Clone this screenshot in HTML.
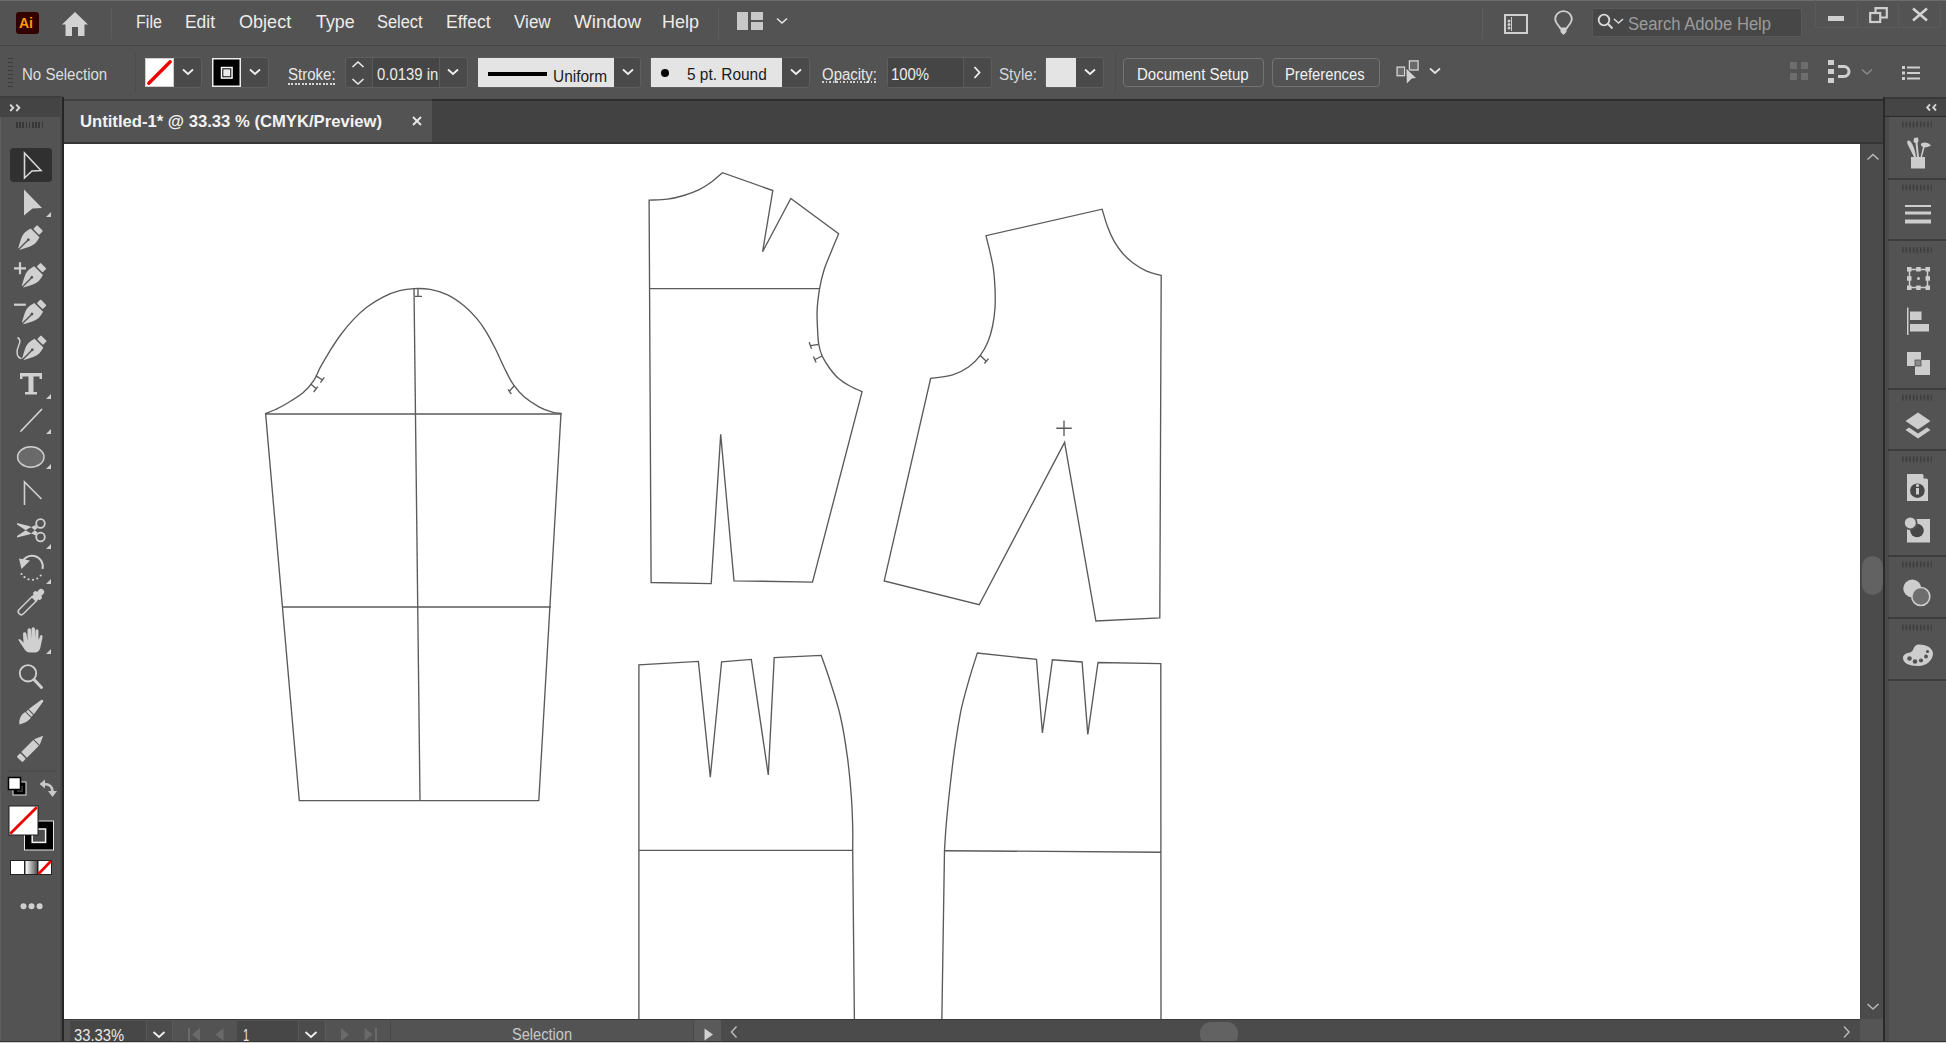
<!DOCTYPE html>
<html><head><meta charset="utf-8">
<style>
*{margin:0;padding:0;box-sizing:border-box}
html,body{width:1946px;height:1043px;overflow:hidden;background:#535353;font-family:"Liberation Sans",sans-serif;color:#e6e6e6}
.a{position:absolute}
#menubar{left:0;top:0;width:1946px;height:45px;background:#535353;border-top:1px solid #6b6b6b}
#ctrl{left:0;top:45px;width:1946px;height:54px;background:#535353;border-top:1px solid #454545}
#tabs{left:62px;top:101px;width:1823px;height:42px;background:#424242}
#tab{left:64px;top:101px;width:368px;height:42px;background:#535353}
#tools{left:0;top:97px;width:62px;height:946px;background:#535353;border-left:1px solid #5d5d5d}
#toolshead{left:0;top:98px;width:60px;height:19px;background:#444}
#canvas{left:64px;top:144px;width:1796px;height:875px;background:#fff}
#vscroll{left:1860px;top:144px;width:23px;height:875px;background:#4b4b4b;border-left:1px solid #444}
#dock{left:1885px;top:97px;width:61px;height:946px;background:#535353}
#status{left:64px;top:1019px;width:1796px;height:24px;background:#4b4b4b}
.mi{position:absolute;top:11px;font-size:17px;line-height:20px;color:#e8e8e8;white-space:nowrap}
.ct{position:absolute;font-size:15px;line-height:18px;color:#e4e4e4;white-space:nowrap}
.box{position:absolute;border:1px solid #5e5e5e;border-radius:3px;background:#4a4a4a}
.sep{position:absolute;width:1px;background:#464646}
.ico{position:absolute;overflow:visible}
</style></head><body>
<div id="menubar" class="a"></div>
<div id="ctrl" class="a"></div>
<div id="tabs" class="a"></div>
<div id="tab" class="a"></div>
<div id="tools" class="a"></div>
<div id="toolshead" class="a"></div>
<div id="canvas" class="a"></div>
<svg class="a" style="left:64px;top:143px" width="1796" height="876" viewBox="64 143 1796 876"><g fill="none" stroke="#5a5a5a" stroke-width="1.35" stroke-linejoin="miter"><path d="M265.6,413.6C267.2,412.9 272.0,411.2 275.5,409.5 C279.0,407.8 282.2,406.3 286.8,403.5 C291.4,400.7 298.5,396.6 303.0,392.8 C307.5,389.0 310.8,385.0 313.7,380.7 C316.6,376.4 317.7,372.1 320.4,367.2 C323.1,362.3 326.4,356.5 329.8,351.1 C333.2,345.7 336.5,340.4 340.5,335.0 C344.5,329.6 349.5,323.6 354.0,318.9 C358.5,314.2 362.5,310.5 367.4,306.8 C372.3,303.1 378.1,299.5 383.5,296.8 C388.9,294.1 394.5,292.1 399.6,290.7 C404.7,289.3 408.9,288.8 414.0,288.6 C419.1,288.4 424.5,288.4 430.1,289.4 C435.7,290.4 442.0,292.1 447.6,294.8 C453.2,297.5 458.8,301.5 463.7,305.5 C468.6,309.5 473.3,314.4 477.1,318.9 C480.9,323.4 483.4,327.1 486.5,332.3 C489.6,337.5 493.0,344.0 495.9,349.8 C498.8,355.6 501.1,361.4 504.0,367.2 C506.9,373.0 510.0,379.8 513.4,384.7 C516.8,389.6 519.9,393.1 524.1,396.8 C528.4,400.5 534.2,404.2 538.9,406.8 C543.6,409.4 548.6,411.1 552.3,412.2 C556.0,413.3 559.5,413.1 561.0,413.3 L538.8,800.6 L299.3,800.6 Z"/><path d="M265.5,414 L561.5,414"/><path d="M414,288.6 L420,800.6"/><path d="M282.4,607 L550.9,607"/><path d="M418,289 L418,296.3 M415,296.3 L422,296.3"/><path d="M315.7,375.6 L322.4,380 M320.4,382.7 L324.4,377.3"/><path d="M310.7,384 L316.4,388.7 M313.7,392 L317.7,386.7"/><path d="M514,386 L509.3,391.4 M508,389.4 L511.3,394"/><path d="M649.1,200.1C652.1,199.9 661.5,200.0 667.3,199.2 C673.1,198.4 678.4,197.1 683.7,195.5 C689.0,193.9 694.6,191.8 699.2,189.6 C703.8,187.4 707.2,185.1 711.1,182.3 C715.0,179.5 720.6,174.3 722.5,172.7 L772.8,190.5 L762.6,251.7 L790.8,198.5 L838.6,233.8 C837.4,236.8 833.7,245.5 831.2,251.7 C828.7,257.8 825.7,264.5 823.8,270.7 C821.9,276.9 820.7,281.9 819.6,288.6 C818.5,295.3 817.4,303.8 817.1,310.7 C816.8,317.6 817.3,324.4 817.6,330.0 C817.9,335.6 818.0,340.2 818.8,344.5 C819.6,348.8 820.5,352.2 822.2,356.0 C823.9,359.8 826.4,363.8 829.1,367.5 C831.8,371.2 834.8,375.2 838.3,378.3 C841.8,381.4 845.8,383.8 849.8,386.0 C853.8,388.2 860.0,390.8 862.1,391.7 L812.5,582.1 L734,580.8 L720.7,434.4 L711.2,583.6 L651.1,582.5 Z"/><path d="M649.2,288.6 L819.6,288.6"/><path d="M818.8,344.4 L810.7,345.7 M809.2,342.2 L811.5,348.8"/><path d="M822.2,356 L815,359.5 M813.4,356.4 L816.1,362.6"/><path d="M930.6,378.5 C934.3,377.9 946.2,376.9 952.6,374.9 C959.0,372.9 964.3,370.0 968.9,366.7 C973.5,363.4 977.2,359.4 980.3,355.3 C983.4,351.2 985.7,347.2 987.7,342.3 C989.8,337.4 991.4,331.7 992.6,326.0 C993.8,320.3 994.6,314.2 995.0,308.0 C995.4,301.8 995.3,295.0 995.0,288.5 C994.7,282.0 994.2,274.9 993.4,268.9 C992.6,262.9 991.3,258.1 990.1,252.6 C988.9,247.1 986.7,238.5 986.0,235.7 L1102.1,209.2 C1103.0,212.0 1105.3,220.5 1107.3,225.9 C1109.3,231.3 1111.6,236.8 1114.2,241.4 C1116.8,246.0 1119.7,249.9 1122.8,253.5 C1125.9,257.1 1129.2,260.1 1133.1,263.0 C1137.0,265.9 1141.4,268.7 1146.1,270.8 C1150.8,272.9 1158.7,274.7 1161.2,275.5 L1159.8,617.9 L1095.9,621 L1064.6,442.4 L979.2,604.7 L884.2,580.9 Z"/><path d="M980,355.3 L986,361 M984.4,363.5 L988.5,358.6"/><path d="M1056.3,428.2 L1071.8,428.2 M1064,420.5 L1064,436"/><path d="M638.9,1030 L638.9,664.9 L698.4,661.4 L710.3,777.1 L721.6,661.8 L751.3,659.4 L768.3,775 L774.2,657.6 L821.2,655.4 C822.7,659.7 826.9,671.2 830.1,681.2 C833.3,691.2 837.4,703.1 840.2,715.5 C843.1,727.9 845.4,742.3 847.2,755.7 C849.1,769.1 850.4,784.2 851.3,796.0 C852.2,807.8 852.5,817.1 852.7,826.2 C852.9,835.3 852.7,846.4 852.7,850.4 L854.5,1030"/><path d="M638.9,850.3 L852.5,850.3"/><path d="M941.7,1030 L944.5,850.4 C944.8,846.4 945.2,836.9 946.1,826.2 C947.0,815.5 948.6,799.4 950.1,786.0 C951.6,772.6 953.2,758.5 955.1,745.7 C957.0,732.9 958.9,720.5 961.2,709.4 C963.6,698.3 966.5,688.6 969.2,679.2 C971.9,669.8 975.9,657.5 977.3,653.1 L1036.5,659.4 L1042.4,733 L1052.4,659.8 L1082.1,662 L1087.8,734.4 L1098,662.5 L1160.8,663.6 L1161,1030"/><path d="M944.8,850.7 L1161,852.2"/></g></svg>
<div id="vscroll" class="a"></div>
<div id="dock" class="a"></div>
<div id="status" class="a"></div>

<!-- MENUBAR -->
<div class="a" style="left:16px;top:12px;width:23px;height:22px;background:#330000;border-radius:3px"></div>
<div class="a" style="left:19px;top:15px;font-size:14px;line-height:16px;font-weight:bold;color:#ff9a00">Ai</div>
<svg class="ico" style="left:62px;top:12px" width="26" height="24" viewBox="0 0 26 24"><path d="M13,0 L26,12.5 L22.5,12.5 L22.5,24 L16,24 L16,15 L10,15 L10,24 L3.5,24 L3.5,12.5 L0,12.5 Z" fill="#d2d2d2"/></svg>
<div class="sep" style="left:111px;top:8px;height:31px;background:#5c5c5c"></div>
<div class="sep" style="left:718px;top:8px;height:31px;background:#5c5c5c"></div>
<div class="a" style="left:737px;top:12px;width:11px;height:18px;background:#c8c8c8"></div>
<div class="a" style="left:751px;top:12px;width:12px;height:8px;background:#c8c8c8"></div>
<div class="a" style="left:751px;top:22px;width:12px;height:8px;background:#c8c8c8"></div>
<svg class="ico" style="left:776px;top:17px" width="12" height="8" viewBox="0 0 12 8"><path d="M1,1.5 L6,6 L11,1.5" fill="none" stroke="#e6e6e6" stroke-width="1.6"/></svg>
<div class="sep" style="left:1482px;top:8px;height:31px;background:#5c5c5c"></div>
<svg class="ico" style="left:1504px;top:14px" width="24" height="20" viewBox="0 0 24 20"><rect x="1" y="1" width="22" height="18" fill="none" stroke="#cfcfcf" stroke-width="2"/><circle cx="5" cy="7" r="1.5" fill="#cfcfcf"/><circle cx="5" cy="10.5" r="1.5" fill="#cfcfcf"/><circle cx="5" cy="14" r="1.5" fill="#cfcfcf"/><path d="M7.5,3 V17" stroke="#cfcfcf" stroke-width="1"/></svg>
<svg class="ico" style="left:1554px;top:10px" width="19" height="26" viewBox="0 0 19 26"><path d="M9.5,1.2 C4.5,1.2 1.2,4.8 1.2,9 C1.2,13 5,15.5 6.5,18.5 L12.5,18.5 C14,15.5 17.8,13 17.8,9 C17.8,4.8 14.5,1.2 9.5,1.2 Z" fill="none" stroke="#cfcfcf" stroke-width="1.8"/><path d="M6.5,19 L12.5,19 L12.5,22 L9.5,25 L6.5,22 Z" fill="#cfcfcf"/></svg>
<div class="a" style="left:1592px;top:8px;width:210px;height:29px;background:#474747;border:1px solid #595959;border-radius:2px"></div>
<svg class="ico" style="left:1597px;top:13px" width="30" height="18" viewBox="0 0 30 18"><circle cx="7" cy="7" r="5.3" fill="none" stroke="#d8d8d8" stroke-width="1.8"/><path d="M10.8,10.8 L15.5,15.5" stroke="#d8d8d8" stroke-width="2"/><path d="M17,6 L21.5,10 L26,6" fill="none" stroke="#d8d8d8" stroke-width="1.6"/></svg>
<div class="a" style="left:1815px;top:0px;width:126px;height:28px;border:1px solid #5a5a5a;border-top:none;border-radius:0 0 3px 3px"></div>
<div class="sep" style="left:1857px;top:0;height:28px;background:#5a5a5a"></div>
<div class="sep" style="left:1898px;top:0;height:28px;background:#5a5a5a"></div>
<div class="a" style="left:1828px;top:16px;width:16px;height:5px;background:#cfcfcf"></div>
<svg class="ico" style="left:1869px;top:7px" width="19" height="16" viewBox="0 0 19 16"><rect x="1.2" y="6" width="10" height="9" fill="none" stroke="#cfcfcf" stroke-width="2.2"/><path d="M6.5,5.5 V1.2 H17.8 V10.5 H12" fill="none" stroke="#cfcfcf" stroke-width="2.2"/></svg>
<svg class="ico" style="left:1912px;top:8px" width="16" height="13" viewBox="0 0 16 13"><path d="M1,0.5 L15,12.5 M15,0.5 L1,12.5" stroke="#d4d4d4" stroke-width="2.6"/></svg>
<div class="a" style="left:8px;top:58px;width:5px;height:29px;background:repeating-linear-gradient(to bottom,#3c3c3c 0 1.5px,transparent 1.5px 4px)"></div>
<div class="sep" style="left:135px;top:53px;height:40px;background:#4c4c4c"></div>
<!-- fill swatch -->
<div class="box" style="left:173px;top:57px;width:29px;height:31px;border-radius:0 3px 3px 0;background:#4a4a4a"></div>
<svg class="ico" style="left:145px;top:58px" width="29" height="29" viewBox="0 0 29 29"><rect x="0.5" y="0.5" width="28" height="28" fill="#fff" stroke="#cfcfcf" stroke-width="1"/><path d="M3.8,25.2 L25.2,3.8" stroke="#ee0000" stroke-width="3.4" stroke-linecap="round"/></svg>
<svg class="ico" style="left:182px;top:68px" width="12" height="8" viewBox="0 0 12 8"><path d="M1,1.5 L6,6 L11,1.5" fill="none" stroke="#f0f0f0" stroke-width="1.8"/></svg>
<!-- stroke swatch -->
<div class="box" style="left:240px;top:57px;width:29px;height:31px;border-radius:0 3px 3px 0;background:#4a4a4a"></div>
<svg class="ico" style="left:212px;top:58px" width="29" height="29" viewBox="0 0 29 29"><rect x="0.75" y="0.75" width="27.5" height="27.5" fill="#000" stroke="#ececec" stroke-width="1.5"/><rect x="9.55" y="9.55" width="10.5" height="10.5" fill="#000" stroke="#fff" stroke-width="1.5"/><rect x="11.3" y="11.3" width="7" height="7" fill="#eaeaea"/></svg>
<svg class="ico" style="left:249px;top:68px" width="12" height="8" viewBox="0 0 12 8"><path d="M1,1.5 L6,6 L11,1.5" fill="none" stroke="#f0f0f0" stroke-width="1.8"/></svg>
<!-- stroke weight -->
<div class="a" style="left:288px;top:83px;width:47px;height:2px;background:repeating-linear-gradient(to right,#d8d8d8 0 2px,transparent 2px 3.5px)"></div>
<div class="box" style="left:345px;top:57px;width:123px;height:31px;background:#4a4a4a"></div>
<div class="a" style="left:372px;top:58px;width:68px;height:29px;background:#454545;border-left:1px solid #5a5a5a;border-right:1px solid #5a5a5a"></div>
<svg class="ico" style="left:351px;top:60px" width="14" height="26" viewBox="0 0 14 26"><path d="M1.5,7 L7,2 L12.5,7 M1.5,19 L7,24 L12.5,19" fill="none" stroke="#ececec" stroke-width="1.6"/></svg>
<svg class="ico" style="left:447px;top:68px" width="12" height="8" viewBox="0 0 12 8"><path d="M1,1.5 L6,6 L11,1.5" fill="none" stroke="#f0f0f0" stroke-width="1.8"/></svg>
<!-- uniform -->
<div class="box" style="left:478px;top:57px;width:163px;height:31px;background:#4a4a4a"></div>
<div class="a" style="left:478px;top:58px;width:136px;height:29px;background:#e4e4e4"></div>
<div class="a" style="left:488px;top:72px;width:59px;height:4px;background:#000"></div>
<svg class="ico" style="left:622px;top:68px" width="12" height="8" viewBox="0 0 12 8"><path d="M1,1.5 L6,6 L11,1.5" fill="none" stroke="#f0f0f0" stroke-width="1.8"/></svg>
<!-- brush -->
<div class="box" style="left:650px;top:57px;width:160px;height:31px;background:#4a4a4a"></div>
<div class="a" style="left:651px;top:58px;width:131px;height:29px;background:#e4e4e4"></div>
<div class="a" style="left:661px;top:69px;width:8px;height:8px;border-radius:50%;background:#000"></div>
<svg class="ico" style="left:790px;top:68px" width="12" height="8" viewBox="0 0 12 8"><path d="M1,1.5 L6,6 L11,1.5" fill="none" stroke="#f0f0f0" stroke-width="1.8"/></svg>
<!-- opacity -->
<div class="a" style="left:822px;top:81px;width:54px;height:2px;background:repeating-linear-gradient(to right,#d0d0d0 0 1.5px,transparent 1.5px 3.5px)"></div>
<div class="box" style="left:887px;top:57px;width:105px;height:31px;background:#4a4a4a"></div>
<div class="a" style="left:888px;top:58px;width:76px;height:29px;background:#454545;border-right:1px solid #5a5a5a"></div>
<svg class="ico" style="left:973px;top:66px" width="8" height="13" viewBox="0 0 8 13"><path d="M1.5,1 L6.5,6.5 L1.5,12" fill="none" stroke="#f0f0f0" stroke-width="1.8"/></svg>
<!-- style -->
<div class="box" style="left:1045px;top:57px;width:59px;height:31px;background:#4a4a4a"></div>
<div class="a" style="left:1046px;top:58px;width:30px;height:29px;background:#e4e4e4"></div>
<svg class="ico" style="left:1084px;top:68px" width="12" height="8" viewBox="0 0 12 8"><path d="M1,1.5 L6,6 L11,1.5" fill="none" stroke="#f0f0f0" stroke-width="1.8"/></svg>
<div class="sep" style="left:1115px;top:53px;height:40px;background:#4c4c4c"></div>
<!-- buttons -->
<div class="a" style="left:1123px;top:58px;width:141px;height:29px;border:1.5px solid #737373;border-radius:4px"></div>
<div class="a" style="left:1272px;top:58px;width:108px;height:29px;border:1.5px solid #737373;border-radius:4px"></div>
<svg class="ico" style="left:1395px;top:58px" width="26" height="27" viewBox="0 0 26 27"><rect x="2.1" y="9.1" width="7.5" height="8.6" fill="#6a6a6a" stroke="#d4d4d4" stroke-width="1.3"/><rect x="14.4" y="2.9" width="8.7" height="9.1" fill="#6a6a6a" stroke="#d4d4d4" stroke-width="1.3"/><path d="M10.9,9.7 L22,20.4 L16.8,21 L11.3,26.6 Z" fill="#d0d0d0" stroke="#3e3e3e" stroke-width="0.8"/></svg>
<svg class="ico" style="left:1429px;top:67px" width="12" height="8" viewBox="0 0 12 8"><path d="M1,1.5 L6,6 L11,1.5" fill="none" stroke="#e0e0e0" stroke-width="1.8"/></svg>
<!-- right icons -->
<svg class="ico" style="left:1790px;top:62px" width="18" height="18" viewBox="0 0 18 18"><rect x="0" y="0" width="7" height="7" fill="#6e6e6e"/><rect x="11" y="0" width="7" height="7" fill="#6e6e6e"/><rect x="0" y="11" width="7" height="7" fill="#6e6e6e"/><rect x="11" y="11" width="7" height="7" fill="#6e6e6e"/></svg>
<svg class="ico" style="left:1828px;top:60px" width="24" height="23" viewBox="0 0 24 23"><rect x="0" y="0" width="6" height="5" fill="#cfcfcf"/><rect x="0" y="9" width="6" height="5" fill="#cfcfcf"/><rect x="0" y="18" width="6" height="5" fill="#cfcfcf"/><path d="M10,6.5 H16 A5,5 0 0 1 16,16.5 H10" fill="none" stroke="#cfcfcf" stroke-width="3"/></svg>
<svg class="ico" style="left:1861px;top:68px" width="12" height="8" viewBox="0 0 12 8"><path d="M1,1.5 L6,6 L11,1.5" fill="none" stroke="#8a8a8a" stroke-width="1.6"/></svg>
<svg class="ico" style="left:1902px;top:66px" width="18" height="14" viewBox="0 0 18 14"><rect x="0" y="0" width="3" height="3" fill="#cfcfcf"/><rect x="0" y="5.5" width="3" height="3" fill="#cfcfcf"/><rect x="0" y="11" width="3" height="3" fill="#cfcfcf"/><rect x="5" y="0.5" width="13" height="2" fill="#cfcfcf"/><rect x="5" y="6" width="13" height="2" fill="#cfcfcf"/><rect x="5" y="11.5" width="13" height="2" fill="#cfcfcf"/></svg>

<div class="a" style="left:0;top:96px;width:62px;height:2px;background:#3e3e3e"></div>
<div class="a" style="left:64px;top:99px;width:368px;height:2px;background:#404040"></div>
<div class="a" style="left:432px;top:99px;width:1451px;height:2px;background:#2e2e2e"></div>
<div class="a" style="left:1885px;top:97px;width:61px;height:2px;background:#383838"></div>
<div class="a" style="left:60px;top:97px;width:2px;height:946px;background:#484848"></div>
<div class="a" style="left:62px;top:97px;width:2px;height:946px;background:#262626"></div>
<div class="a" style="left:64px;top:142px;width:1819px;height:2px;background:#363636"></div>
<svg class="ico" style="left:412px;top:116px" width="10" height="10" viewBox="0 0 10 10"><path d="M1,1 L9,9 M9,1 L1,9" stroke="#e8e8e8" stroke-width="1.8"/></svg>
<div class="a" style="left:1883px;top:97px;width:2px;height:946px;background:#2a2a2a"></div>
<div class="a" style="left:1885px;top:116px;width:4px;height:927px;background:#4b4b4b"></div>

<div class="a" style="left:9px;top:104px;width:12px;height:8px"><svg width="12" height="8" viewBox="0 0 12 8" style="display:block"><path d="M1.2,0.6 L4.2,3.8 L1.2,7 M7.3,0.6 L10.3,3.8 L7.3,7" fill="none" stroke="#d8d8d8" stroke-width="1.9"/></svg></div>
<div class="a" style="left:16px;top:122px;width:29px;height:6px;background:repeating-linear-gradient(to right,#383838 0 1.5px,transparent 1.5px 3.2px)"></div>
<div class="a" style="left:10px;top:148px;width:42px;height:34px;background:#303030;border-radius:4px"></div>
<svg class="ico" style="left:0;top:140px" width="61" height="880" viewBox="0 140 61 880">
<g fill="#d0d0d0" stroke="none">
<!-- selection -->
<path d="M24.5,153 L41,170.5 L32,171 L24.5,178 Z" fill="#303030" stroke="#d8d8d8" stroke-width="1.6" stroke-linejoin="miter"/>
<!-- direct selection -->
<path d="M24,189.5 L42,208 L32.5,208.5 L24,215.5 Z"/>
<path d="M51,212 L51,217 L46,217 Z"/>
<!-- pen -->
<g transform="translate(28.7,239.3) rotate(45)">
<rect x="-4.2" y="-16" width="8.4" height="5.5" rx="1"/>
<path d="M-6.2,-9 L6.2,-9 C8,-4 8,1 5.5,5.5 L1.3,13.5 L-1.3,13.5 L-5.5,5.5 C-8,1 -8,-4 -6.2,-9 Z"/>
<path d="M0,1 L0,14" stroke="#535353" stroke-width="1.4"/>
<circle cx="0" cy="0.5" r="1.4" fill="#535353"/>
</g>
<!-- add anchor -->
<g transform="translate(32.2,277) rotate(45)">
<rect x="-4.2" y="-16" width="8.4" height="5.5" rx="1"/>
<path d="M-6.2,-9 L6.2,-9 C8,-4 8,1 5.5,5.5 L1.3,13.5 L-1.3,13.5 L-5.5,5.5 C-8,1 -8,-4 -6.2,-9 Z"/>
<path d="M0,1 L0,14" stroke="#535353" stroke-width="1.4"/>
<circle cx="0" cy="0.5" r="1.4" fill="#535353"/>
</g>
<path d="M14,268.3 H26 M20,262.3 V274.3" stroke="#d0d0d0" stroke-width="2.2"/>
<!-- delete anchor -->
<g transform="translate(32.3,313.7) rotate(45)">
<rect x="-4.2" y="-16" width="8.4" height="5.5" rx="1"/>
<path d="M-6.2,-9 L6.2,-9 C8,-4 8,1 5.5,5.5 L1.3,13.5 L-1.3,13.5 L-5.5,5.5 C-8,1 -8,-4 -6.2,-9 Z"/>
<path d="M0,1 L0,14" stroke="#535353" stroke-width="1.4"/>
<circle cx="0" cy="0.5" r="1.4" fill="#535353"/>
</g>
<path d="M14,304.7 H25.8" stroke="#d0d0d0" stroke-width="2.2"/>
<!-- anchor point -->
<g transform="translate(32.6,349.5) rotate(45)">
<rect x="-4.2" y="-16" width="8.4" height="5.5" rx="1"/>
<path d="M-6.2,-9 L6.2,-9 C8,-4 8,1 5.5,5.5 L1.3,13.5 L-1.3,13.5 L-5.5,5.5 C-8,1 -8,-4 -6.2,-9 Z"/>
<path d="M0,1 L0,14" stroke="#535353" stroke-width="1.4"/>
<circle cx="0" cy="0.5" r="1.4" fill="#535353"/>
</g>
<path d="M17.5,337.5 C20.5,339 20.5,342 18.5,346 C16,351 16.5,358 21.5,358.5" fill="none" stroke="#d0d0d0" stroke-width="1.5"/>
<!-- type -->
<path d="M20,373 H42 V379 H39.5 V376.5 H33.5 V392 H37 V394.5 H25 V392 H28.5 V376.5 H22.5 V379 H20 Z"/>
<path d="M51,394 L51,399 L46,399 Z"/>
<!-- line -->
<path d="M21,431 L41.5,409.5" stroke="#d0d0d0" stroke-width="1.8" stroke-linecap="round"/>
<path d="M51,429 L51,434 L46,434 Z"/>
<!-- ellipse -->
<ellipse cx="30.8" cy="457" rx="13.2" ry="10.2" fill="#6a6a6a" stroke="#d0d0d0" stroke-width="1.5"/>
<path d="M51,464 L51,469 L46,469 Z"/>
<!-- shaper-ish -->
<path d="M24.5,505 L24.5,482 L41.5,499" fill="none" stroke="#d0d0d0" stroke-width="1.6"/>
<!-- scissors -->
<circle cx="40.5" cy="523.5" r="4.3" fill="none" stroke="#d0d0d0" stroke-width="1.8"/>
<circle cx="40.5" cy="537" r="4.3" fill="none" stroke="#d0d0d0" stroke-width="1.8"/>
<path d="M17,523 L30,526.3 L37.5,532.5 L35.5,535.5 L28,531.8 L17,524.6 Z M17,537.5 L30,534.2 L37.5,528 L35.5,525 L28,528.7 L17,535.9 Z"/>
<path d="M51,544 L51,549 L46,549 Z"/>
<!-- rotate -->
<path d="M21.5,564 A10.5,10.5 0 1 1 42.5,569" fill="none" stroke="#d0d0d0" stroke-width="2"/>
<path d="M19,558.5 L30,560.5 L21.5,569 Z"/>
<g fill="#d0d0d0"><circle cx="21.5" cy="574" r="1.1"/><circle cx="24.5" cy="577.2" r="1.1"/><circle cx="28.5" cy="579.3" r="1.1"/><circle cx="33" cy="579.8" r="1.1"/><circle cx="37.3" cy="578.5" r="1.1"/><circle cx="40.7" cy="575.5" r="1.1"/></g>
<path d="M51,579 L51,584 L46,584 Z"/>
<!-- eyedropper -->
<g transform="translate(30.5,602.5) rotate(45)">
<rect x="-3" y="-18" width="6" height="8" rx="3"/>
<rect x="-5" y="-12" width="10" height="4" rx="1"/>
<rect x="-3.5" y="-9" width="7" height="4"/>
<path d="M-3,-5 L3,-5 L3,13 A3,3 0 0 1 -3,13 Z" fill="none" stroke="#d0d0d0" stroke-width="1.5"/>
</g>
<!-- hand -->
<path d="M22,641 C20,638.5 17.5,638 19,641 L25,650 C27,652.5 29,652.5 32,652.5 L35,652.5 C38,652.5 40,650 40.5,647 L42.5,637.5 C43,635 41,634 40,636.5 L38.5,640 L38.5,631.5 C38.5,628.5 35.5,628.5 35.5,631.5 L35.5,639 L35,629.5 C35,626.5 31.5,626.5 31.5,629.5 L31.5,639 L31,630.5 C31,627.5 27.5,627.5 27.5,630.5 L27.5,641 L26.5,634 C26,631.5 23,631.5 23,634 L23.5,643 Z"/>
<path d="M51,649 L51,654 L46,654 Z"/>
<!-- zoom -->
<circle cx="28" cy="673.3" r="8.2" fill="none" stroke="#d0d0d0" stroke-width="1.8"/>
<path d="M34,679.5 L41.5,687.5" stroke="#d0d0d0" stroke-width="3" stroke-linecap="round"/>
<!-- paintbrush -->
<g transform="translate(19,724) rotate(-45)"><path d="M17.5,-3.6 L33,-1.3 Q34.8,0 33,1.3 L17.5,3.6 Z"/><rect x="13.8" y="-3.6" width="2.6" height="7.2"/><path d="M12.8,-4 C8,-5.2 3,-3.5 0,0.6 C3,2.5 8,4.8 12.8,4 Z"/></g>
<!-- pencil -->
<g transform="translate(19.5,759.5) rotate(-45)"><rect x="0" y="-4" width="5" height="8" rx="1"/><rect x="6.5" y="-4" width="17" height="8"/><path d="M24.5,-4 L33.5,0 L24.5,4 Z"/></g>
</g>
<path d="M8,771 H55" stroke="#484848" stroke-width="1"/>
<!-- default fill stroke -->
<rect x="13" y="782" width="13" height="13" fill="#000" stroke="#e0e0e0" stroke-width="1"/>
<rect x="17" y="786" width="6" height="6" fill="#333" stroke="#fff" stroke-width="0"/>
<rect x="8.5" y="777.5" width="12" height="12" fill="#fff" stroke="#000" stroke-width="1.5"/>
<path d="M44,784 C49.5,784 52.5,787 52.5,791.5" fill="none" stroke="#c8c8c8" stroke-width="2.6"/><path d="M39.5,784 L45,779.5 L45,788.5 Z" fill="#c8c8c8"/><path d="M52.5,797 L48,791 L57,791 Z" fill="#c8c8c8"/>
<!-- stroke box -->
<rect x="24.5" y="821" width="29" height="29" fill="#000" stroke="#e6e6e6" stroke-width="1"/>
<rect x="32.2" y="829" width="13.4" height="13.4" fill="#4d4d4d" stroke="#f4f4f4" stroke-width="1.5"/>
<!-- fill box -->
<rect x="8.5" y="805.5" width="30" height="30" fill="#1e1e1e"/>
<rect x="9.5" y="806.5" width="28" height="28" fill="#fff"/>
<path d="M10.2,833.8 L36.8,807.2" stroke="#ee0000" stroke-width="2.7"/>
<!-- color/grad/none -->
<defs><linearGradient id="gr" x1="0" x2="1"><stop offset="0" stop-color="#fff"/><stop offset="1" stop-color="#555"/></linearGradient></defs>
<rect x="10" y="860" width="42" height="15" fill="#222"/>
<rect x="11" y="861" width="13" height="13" fill="#fff"/>
<rect x="25.5" y="861" width="11.5" height="13" fill="url(#gr)"/>
<rect x="38.5" y="861" width="12.5" height="13" fill="#fff"/>
<path d="M38.5,874 L51,861" stroke="#ee0000" stroke-width="2.6"/>
<!-- more -->
<circle cx="23.5" cy="906.3" r="3" fill="#cfcfcf"/><circle cx="31.5" cy="906.3" r="3" fill="#cfcfcf"/><circle cx="39.6" cy="906.3" r="3" fill="#cfcfcf"/>
</svg>

<div class="a" style="left:1885px;top:99px;width:61px;height:17px;background:#454545"></div>
<div class="a" style="left:1885px;top:115.5px;width:61px;height:1.5px;background:#2a2a2a"></div>
<svg class="ico" style="left:1887px;top:97px" width="59" height="946" viewBox="1887 97 59 946">
<path d="M1930,104.3 L1927.2,107.4 L1930,110.5 M1936,104.3 L1933.2,107.4 L1936,110.5" fill="none" stroke="#d4d4d4" stroke-width="1.9"/>
<g fill="#3a3a3a">
<rect x="1888" y="178" width="58" height="2" fill="#3c3c3c"/>
<rect x="1888" y="239" width="58" height="2" fill="#3c3c3c"/>
<rect x="1888" y="388" width="58" height="2" fill="#3c3c3c"/>
<rect x="1888" y="449" width="58" height="2" fill="#3c3c3c"/>
<rect x="1888" y="555" width="58" height="2" fill="#3c3c3c"/>
<rect x="1888" y="617" width="58" height="2" fill="#3c3c3c"/>
<rect x="1888" y="679" width="58" height="2" fill="#3c3c3c"/>
</g>
<g fill="none" stroke="#363636" stroke-width="1.6" stroke-dasharray="1.6 2">
<path d="M1902,124.5 H1932"/><path d="M1902,187.5 H1932"/><path d="M1902,250 H1932"/><path d="M1902,397.5 H1932"/><path d="M1902,459.3 H1932"/><path d="M1902,564.5 H1932"/><path d="M1902,627.5 H1932"/>
</g>
<g fill="none" stroke="#404040" stroke-width="6" stroke-dasharray="1.6 2" opacity="0.9">
<path d="M1902,124.5 H1932"/><path d="M1902,187.5 H1932"/><path d="M1902,250 H1932"/><path d="M1902,397.5 H1932"/><path d="M1902,459.3 H1932"/><path d="M1902,564.5 H1932"/><path d="M1902,627.5 H1932"/>
</g>
<g fill="#cdcdcd">
<!-- libraries pot -->
<rect x="1911" y="157" width="14" height="11.5"/>
<path d="M1914,157 L1908,145 C1906,141 1908,139.5 1910,141 C1913,144 1915,150 1916,157 Z"/>
<path d="M1917,157 L1915.5,143 L1913.5,142 L1914,138 L1918,137.5 L1918.5,141 L1917.5,143 L1919,157 Z"/>
<path d="M1920.5,157 L1923,147 C1921,146 1920,144 1922,143 C1925,141.5 1929,143 1931,145.5 C1929,146.5 1926,147.5 1924.5,147.5 L1922,157 Z"/>
<!-- stroke lines -->
<rect x="1905" y="205" width="26" height="2"/>
<rect x="1905" y="211.5" width="26" height="3"/>
<rect x="1905" y="219.5" width="26" height="4"/>
<!-- transform -->
<rect x="1909.5" y="269.5" width="18" height="18" fill="none" stroke="#cdcdcd" stroke-width="1.5"/>
<rect x="1907" y="267" width="4.5" height="4.5"/><rect x="1916.2" y="267" width="4.5" height="4.5"/><rect x="1925.5" y="267" width="4.5" height="4.5"/>
<rect x="1907" y="276.2" width="4.5" height="4.5"/><rect x="1925.5" y="276.2" width="4.5" height="4.5"/>
<rect x="1907" y="285.5" width="4.5" height="4.5"/><rect x="1916.2" y="285.5" width="4.5" height="4.5"/><rect x="1925.5" y="285.5" width="4.5" height="4.5"/>
<circle cx="1918.5" cy="278.5" r="1.5"/>
<!-- align -->
<rect x="1907" y="307.5" width="1.5" height="27.5"/>
<rect x="1910" y="311.5" width="11.5" height="8.5"/>
<rect x="1910" y="324" width="19" height="7.5"/>
<!-- pathfinder -->
<rect x="1907" y="352" width="14" height="14"/>
<rect x="1915" y="360" width="15" height="15"/>
<rect x="1915" y="360" width="6" height="6" fill="#8a8a8a" stroke="#535353" stroke-width="0.8"/>
<!-- layers -->
<path d="M1918,412.5 L1930.5,421 L1918,429.5 L1905.5,421 Z"/>
<path d="M1905.5,430 L1909,427.5 L1918,433.5 L1927,427.5 L1930.5,430 L1918,438.5 Z"/>
<!-- doc info -->
<path d="M1907,474 L1922.5,474 L1928,479.5 L1928,501 L1907,501 Z"/>
<path d="M1923.5,474.5 L1927.5,478.5 L1923.5,478.5 Z" fill="#535353"/>
<circle cx="1917.4" cy="490.7" r="7.3" fill="#474747"/>
<rect x="1916" y="488" width="3" height="6.5"/><circle cx="1917.5" cy="485.5" r="1.6"/>
<!-- asset export -->
<rect x="1907" y="519" width="23" height="23.5"/>
<circle cx="1917" cy="530.5" r="6.8" fill="#474747"/>
<circle cx="1910.3" cy="522.9" r="7.3" fill="#535353"/>
<circle cx="1910.3" cy="522.9" r="5.5"/>
<!-- appearance -->
<circle cx="1912.3" cy="588.5" r="9"/>
<circle cx="1920.8" cy="596.5" r="9" fill="#6e6e6e" stroke="#cdcdcd" stroke-width="1.6"/>
<!-- palette -->
<path d="M1918,644.5 C1926,644 1933,648 1933,653.5 C1933,659 1928,666 1918,666 C1909,666 1903,663 1903,658 C1903,654 1907,653 1910,652.5 C1914,652 1913,645 1918,644.5 Z"/>
<g fill="#535353"><circle cx="1909.5" cy="658.5" r="2.3"/><circle cx="1915" cy="661.5" r="2.3"/><circle cx="1921" cy="660.5" r="2.1"/><circle cx="1926" cy="656.5" r="1.9"/><circle cx="1927.5" cy="651.5" r="1.6"/></g>
</g>
</svg>

<div class="a" style="left:64px;top:1019px;width:1796px;height:1px;background:#3a3a3a"></div>
<div class="a" style="left:64px;top:1020px;width:657px;height:23px;background:#535353"></div>
<div class="a" style="left:70px;top:1021px;width:76px;height:22px;background:#474747"></div>
<div class="a" style="left:146px;top:1021px;width:26px;height:22px;background:#4c4c4c;border-left:1px solid #5a5a5a"></div>
<div class="a" style="left:172px;top:1021px;width:65px;height:22px;background:#535353;border-left:1px solid #5a5a5a"></div>
<div class="a" style="left:237px;top:1021px;width:61px;height:22px;background:#474747"></div>
<div class="a" style="left:298px;top:1021px;width:27px;height:22px;background:#4c4c4c;border-left:1px solid #5a5a5a"></div>
<div class="a" style="left:325px;top:1021px;width:65px;height:22px;background:#535353;border-left:1px solid #5a5a5a"></div>
<div class="a" style="left:390px;top:1020px;width:1px;height:23px;background:#484848"></div>
<div class="a" style="left:693px;top:1020px;width:28px;height:23px;background:#5a5a5a;border-left:1px solid #4a4a4a"></div>
<div class="a" style="left:721px;top:1020px;width:1139px;height:23px;background:#4b4b4b"></div>
<div class="a" style="left:1860px;top:1019px;width:23px;height:24px;background:#555"></div>
<div class="a" style="left:1200px;top:1022px;width:38px;height:24px;background:#626262;border-radius:11px"></div>
<svg class="ico" style="left:64px;top:1019px" width="1820" height="24" viewBox="64 1019 1820 24">
<g fill="none" stroke-width="1.8">
<path d="M153.5,1032 L159,1037 L164.5,1032" stroke="#f0f0f0"/>
<path d="M305.5,1032 L311,1037 L316.5,1032" stroke="#f0f0f0"/>
<path d="M736.5,1026.5 L731.5,1032 L736.5,1037.5" stroke="#b8b8b8" stroke-width="1.5"/>
<path d="M1844,1026.5 L1849,1032 L1844,1037.5" stroke="#b8b8b8" stroke-width="1.5"/>
</g>
<g fill="#6a6a6a">
<rect x="188" y="1028" width="2" height="13"/><path d="M200,1028 L192,1034.5 L200,1041 Z"/>
<path d="M223.5,1028 L215.5,1034.5 L223.5,1041 Z"/>
<path d="M341,1028 L349,1034.5 L341,1041 Z"/>
<path d="M364.5,1028 L372.5,1034.5 L364.5,1041 Z"/><rect x="375" y="1028" width="2" height="13"/>
</g>
<path d="M704.5,1028.5 L713,1034.5 L704.5,1040.5 Z" fill="#d0d0d0"/>
</svg>
<!-- vertical scrollbar -->
<svg class="ico" style="left:1860px;top:143px" width="24" height="876" viewBox="1860 143 24 876">
<path d="M1867.5,159.5 L1873,154.5 L1878.5,159.5" fill="none" stroke="#b8b8b8" stroke-width="1.5"/>
<path d="M1867.5,1004 L1873,1009 L1878.5,1004" fill="none" stroke="#b8b8b8" stroke-width="1.5"/>
<rect x="1862" y="556" width="21" height="39" rx="10.5" fill="#626262"/>
</svg>

<div id="m1" class="a" style="left:136.11px;top:12.00px;font-size:18px;line-height:21px;font-weight:normal;color:#ececec;white-space:nowrap;transform-origin:0 0;transform:scaleX(0.8929)">File</div>
<div id="m2" class="a" style="left:185.03px;top:12.00px;font-size:18px;line-height:21px;font-weight:normal;color:#ececec;white-space:nowrap;transform-origin:0 0;transform:scaleX(0.9672)">Edit</div>
<div id="m3" class="a" style="left:239.20px;top:12.00px;font-size:18px;line-height:21px;font-weight:normal;color:#ececec;white-space:nowrap;transform-origin:0 0;transform:scaleX(1.0040)">Object</div>
<div id="m4" class="a" style="left:316.00px;top:12.00px;font-size:18px;line-height:21px;font-weight:normal;color:#ececec;white-space:nowrap;transform-origin:0 0;transform:scaleX(0.9900)">Type</div>
<div id="m5" class="a" style="left:376.60px;top:12.00px;font-size:18px;line-height:21px;font-weight:normal;color:#ececec;white-space:nowrap;transform-origin:0 0;transform:scaleX(0.9123)">Select</div>
<div id="m6" class="a" style="left:446.02px;top:12.00px;font-size:18px;line-height:21px;font-weight:normal;color:#ececec;white-space:nowrap;transform-origin:0 0;transform:scaleX(0.9778)">Effect</div>
<div id="m7" class="a" style="left:514.00px;top:12.00px;font-size:18px;line-height:21px;font-weight:normal;color:#ececec;white-space:nowrap;transform-origin:0 0;transform:scaleX(0.9487)">View</div>
<div id="m8" class="a" style="left:574.00px;top:12.00px;font-size:18px;line-height:21px;font-weight:normal;color:#ececec;white-space:nowrap;transform-origin:0 0;transform:scaleX(1.0466)">Window</div>
<div id="m9" class="a" style="left:662.00px;top:12.00px;font-size:18px;line-height:21px;font-weight:normal;color:#ececec;white-space:nowrap;transform-origin:0 0;transform:scaleX(1.0000)">Help</div>
<div id="srch" class="a" style="left:1628.08px;top:14.00px;font-size:18px;line-height:21px;font-weight:normal;color:#9c9c9c;white-space:nowrap;transform-origin:0 0;transform:scaleX(0.9221)">Search Adobe Help</div>
<div id="c1" class="a" style="left:22.46px;top:65.00px;font-size:16px;line-height:19px;font-weight:normal;color:#dedede;white-space:nowrap;transform-origin:0 0;transform:scaleX(0.9393)">No Selection</div>
<div id="c2" class="a" style="left:288.00px;top:65.00px;font-size:16px;line-height:19px;font-weight:normal;color:#e8e8e8;white-space:nowrap;transform-origin:0 0;transform:scaleX(0.9400)">Stroke:</div>
<div id="c3" class="a" style="left:377.40px;top:65.00px;font-size:16px;line-height:19px;font-weight:normal;color:#ececec;white-space:nowrap;transform-origin:0 0;transform:scaleX(0.9305)">0.0139 in</div>
<div id="c4" class="a" style="left:553.44px;top:67.00px;font-size:16px;line-height:19px;font-weight:normal;color:#1b1b1b;white-space:nowrap;transform-origin:0 0;transform:scaleX(0.9636)">Uniform</div>
<div id="c5" class="a" style="left:687.00px;top:65.00px;font-size:16px;line-height:19px;font-weight:normal;color:#1b1b1b;white-space:nowrap;transform-origin:0 0;transform:scaleX(0.9634)">5 pt. Round</div>
<div id="c6" class="a" style="left:822.00px;top:65.00px;font-size:16px;line-height:19px;font-weight:normal;color:#e8e8e8;white-space:nowrap;transform-origin:0 0;transform:scaleX(0.9346)">Opacity:</div>
<div id="c7" class="a" style="left:891.25px;top:65.00px;font-size:16px;line-height:19px;font-weight:normal;color:#ececec;white-space:nowrap;transform-origin:0 0;transform:scaleX(0.9313)">100%</div>
<div id="c8" class="a" style="left:999.00px;top:65.00px;font-size:16px;line-height:19px;font-weight:normal;color:#d8d8d8;white-space:nowrap;transform-origin:0 0;transform:scaleX(0.9487)">Style:</div>
<div id="c9" class="a" style="left:1136.86px;top:65.00px;font-size:16px;line-height:19px;font-weight:normal;color:#f2f2f2;white-space:nowrap;transform-origin:0 0;transform:scaleX(0.9373)">Document Setup</div>
<div id="c10" class="a" style="left:1285.48px;top:65.00px;font-size:16px;line-height:19px;font-weight:normal;color:#f2f2f2;white-space:nowrap;transform-origin:0 0;transform:scaleX(0.9224)">Preferences</div>
<div id="tt" class="a" style="left:79.60px;top:112.00px;font-size:17px;line-height:20px;font-weight:bold;color:#f2f2f2;white-space:nowrap;transform-origin:0 0;transform:scaleX(0.9792)">Untitled-1* @ 33.33 % (CMYK/Preview)</div>
<div id="s1" class="a" style="left:74.42px;top:1026.20px;font-size:16px;line-height:19px;font-weight:normal;color:#e8e8e8;white-space:nowrap;transform-origin:0 0;transform:scaleX(0.9224)">33.33%</div>
<div id="s2" class="a" style="left:243.18px;top:1026.00px;font-size:16px;line-height:19px;font-weight:normal;color:#e8e8e8;white-space:nowrap;transform-origin:0 0;transform:scaleX(0.6868)">1</div>
<div id="s3" class="a" style="left:511.78px;top:1025.00px;font-size:16px;line-height:19px;font-weight:normal;color:#c8c8c8;white-space:nowrap;transform-origin:0 0;transform:scaleX(0.9120)">Selection</div>
<div class="a" style="left:0;top:1041px;width:1946px;height:1px;background:#353535"></div>
<div class="a" style="left:0;top:1042px;width:1946px;height:1px;background:#cfcfcf"></div>
</body></html>
